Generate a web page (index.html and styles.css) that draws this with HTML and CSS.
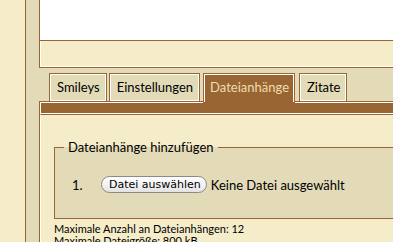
FILE: index.html
```html
<!DOCTYPE html>
<html lang="de">
<head>
    <meta charset="UTF-8">
    <title>Beitrag schreiben</title>
    <link rel="stylesheet" href="styles.css">
</head>
<body>
    <div class="frame">
        <div class="editor">
            <div class="editor-text"></div>
            <div class="editor-bar"></div>
        </div>

        <ul class="tabs">
            <li class="tab">Smileys</li>
            <li class="tab">Einstellungen</li>
            <li class="tab active">Dateianhänge</li>
            <li class="tab">Zitate</li>
        </ul>

        <div class="panel">
            <div class="panel-head"></div>
            <div class="panel-body">
                <fieldset class="uploads">
                    <legend>Dateianhänge hinzufügen</legend>
                    <div class="upload-row">
                        <span class="num">1.</span>
                        <span class="file-btn">Datei auswählen</span>
                        <span class="file-name">Keine Datei ausgewählt</span>
                    </div>
                </fieldset>
                <p class="limits">Maximale Anzahl an Dateianhängen: 12<br>Maximale Dateigröße: 800 kB</p>
            </div>
        </div>
    </div>
</body>
</html>
```

FILE: styles.css
```css
html, body {
    margin: 0;
    padding: 0;
    height: 100%;
    overflow: hidden;
}
body {
    background: #f5ecc9;
    font-family: Lato, "Liberation Sans", sans-serif;
    font-size: 13px;
    color: #000;
}
.frame {
    margin-left: 25px;
    height: 100%;
    border-left: 1px solid #996633;
    background: #e3dbb8;
    padding-left: 13px;
    overflow: hidden;
}
.editor {
    border-left: 1px solid #996633;
    border-bottom: 1px solid #996633;
}
.editor-text {
    height: 40px;
    background: #fff;
    border-bottom: 1px solid #996633;
}
.editor-bar {
    height: 25px;
    background: #f5ecc9;
    border-left: 1px solid #fff;
    border-bottom: 1px solid #fff;
}
.tabs {
    list-style: none;
    margin: 0 0 -1px;
    padding: 5px 0 0 10px;
    display: flex;
    align-items: flex-start;
    gap: 2px;
    position: relative;
    z-index: 1;
}
.tab {
    border: 1px solid #996633;
    box-shadow: inset 0 0 0 1px #fff;
    padding: 6px 6px 6px 7px;
    line-height: 15px;
    background: #e3dbb8;
}
.tab.active {
    background: #996633;
    color: #eedcb0;
    box-shadow: inset 1px 1px 0 #fff, inset -1px 0 0 #fff;
    padding: 6px 5px 7px 6px;
    margin: 0 2px -1px 1px;
}
.panel {
    border-left: 1px solid #996633;
    border-top: 1px solid #996633;
}
.panel-head {
    height: 10px;
    background: #996633;
    border: 1px solid #fff;
    border-right: none;
}
.panel-body {
    background: #f5ecc9;
    border-top: 1px solid #996633;
    border-left: 1px solid #fff;
    padding: 24px 0 0 13px;
    height: 200px;
}
.uploads {
    margin: 0;
    padding: 21px 0 25px 17px;
    border: 1px solid #996633;
    border-right: none;
    background: #e3dbb8;
}
.uploads legend {
    padding: 0 4px;
    margin-left: -8px;
    line-height: 16px;
}
.upload-row {
    display: flex;
    align-items: center;
    height: 17px;
}
.num {
    width: 29px;
}
.file-btn {
    font-family: "DejaVu Sans", sans-serif;
    font-size: 11px;
    line-height: 15px;
    padding: 0 5px 0 7px;
    border: 1px solid #8a8a8a;
    border-radius: 9px;
    background: linear-gradient(#ffffff, #f4f4f4 50%, #e2e2e2);
    margin-right: 4px;
}
.limits {
    margin: 4px 0 0;
    font-size: 11px;
    line-height: 12px;
}
```
